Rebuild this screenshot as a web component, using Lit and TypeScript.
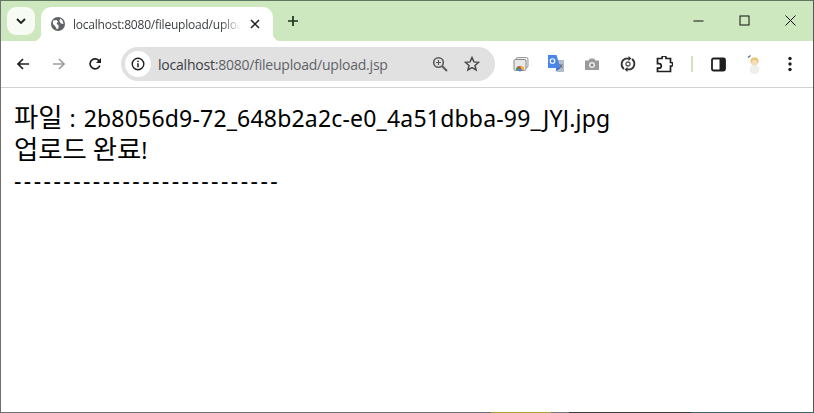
import { LitElement, html, css } from "lit";
import { customElement } from "lit/decorators.js";

@customElement("app-root")
export class AppRoot extends LitElement {
  static styles = css`
    :host { display: block; width: 814px; height: 413px; overflow: hidden; font-family: "Open Sans", "Noto Sans", sans-serif; }
    .win { box-sizing: border-box; width: 814px; height: 413px; border: 1px solid #6f6f6f; border-top-color: #5f7a60; border-right-color: #555; border-bottom: 0; background: #fff; display: flex; flex-direction: column; position: relative; }
    .tabs { height: 40px; background: #cde8bf; display: flex; align-items: flex-start; flex: none; }
    .drop { width: 28px; height: 28px; margin: 6px 0 0 6px; border-radius: 9px; background: #f6fbf3; display: flex; align-items: center; justify-content: center; flex: none; }
    .tab { width: 232px; height: 34px; margin: 6px 0 0 6px; background: #fff; border-radius: 10px 10px 0 0; display: flex; align-items: center; flex: none; position: relative; box-sizing: border-box; padding: 0 0 0 9px; }
    .tab::before, .tab::after { content: ""; position: absolute; bottom: 0; width: 8px; height: 8px; }
    .tab::before { left: -8px; background: radial-gradient(circle at 0 0, #cde8bf 8px, #fff 8.5px); }
    .tab::after { right: -8px; background: radial-gradient(circle at 100% 0, #cde8bf 8px, #fff 8.5px); }
    .tab-title { width: 168px; margin-left: 7px; font-size: 12px; color: #3c4043; white-space: nowrap; overflow: hidden; letter-spacing: -0.22px; -webkit-mask-image: linear-gradient(to right, #000 148px, transparent 168px); mask-image: linear-gradient(to right, #000 148px, transparent 168px); }
    .tab-x { margin-left: 9px; display: flex; }
    .plus { margin: 14px 0 0 14px; display: flex; }
    .spacer { flex: 1; }
    .wc { display: flex; }
    .wc div { width: 46px; height: 39px; display: flex; align-items: center; justify-content: center; }
    .toolbar { height: 46px; flex: none; background: #fff; border-bottom: 1px solid #d2d2d2; display: flex; align-items: center; }
    .nav { width: 36px; display: flex; justify-content: center; flex: none; }
    .nav.first { margin-left: 4px; }
    .omni { width: 374px; height: 34px; margin-left: 8px; border-radius: 17px; background: #e1e1e1; display: flex; align-items: center; flex: none; box-sizing: border-box; }
    .info { width: 26px; height: 26px; margin-left: 4px; border-radius: 50%; background: #fff; display: flex; align-items: center; justify-content: center; flex: none; }
    .url { margin-left: 7px; font-size: 14px; color: #5f6368; white-space: nowrap; flex: 1; letter-spacing: -0.22px; }
    .url b { font-weight: 400; color: #3c4043; }
    .omni-ico { display: flex; margin-right: 14px; }
    .omni-ico + .omni-ico { margin-left: 2px; margin-right: 15px; }
    .ext { display: flex; align-items: center; margin-left: 9px; }
    .ext > * { flex: none; }
    .ei { width: 36px; display: flex; justify-content: center; }
    .ei.tight { width: 34px; }
    .ei.wide { width: 37px; }
    .sep { width: 2px; height: 16px; background: #cde8bf; margin: 0 7px 0 8px; }
    .page { flex: 1; padding: 15px 13px 0; font-family: "Noto Sans", "Noto Sans CJK KR", sans-serif; font-size: 23px; color: #000; line-height: 31px; }
    .page div { white-space: nowrap; }
    .ko { font-family: "Noto Sans CJK KR", sans-serif; font-size: 26.4px; line-height: 1; }
    .colon { margin: 0 2px 0 1px; }
    .file { letter-spacing: 0.19px; }
    .done { margin-top: 1px; }
    .dashes { margin-top: -1px; letter-spacing: 2.45px; }
    .strip { position: absolute; left: -1px; right: -1px; bottom: 0; height: 1px; background: linear-gradient(to right, #6f6f6f 0, #6f6f6f 491px, #a89f30 491px, #a89f30 551px, #777 551px, #777 569px, #3a3a38 569px, #3a3a38 691px, #3f6468 691px, #3f6468 100%); }
  `;

  render() {
    return html`<div class="win">
      <div class="tabs">
        <div class="drop"><svg width="12" height="12" viewBox="0 0 12 12"><path d="M2 4l4 4 4-4" fill="none" stroke="#1f1f1f" stroke-width="1.8"/></svg></div>
        <div class="tab">
          <svg width="16" height="16" viewBox="0 0 16 16"><circle cx="8" cy="8" r="7" fill="#5f6368"/><path d="M3 4.500l3.500-.5L8 5.500 6.500 8l2 1v3L7 13.500 5 10 3 8z M10 2.500l2.500 2L13.500 8 11 7.500 9.500 5.500z" fill="#fff"/></svg>
          <div class="tab-title">localhost:8080/fileupload/upload.jsp</div>
          <div class="tab-x"><svg width="10" height="10" viewBox="0 0 10 10"><path d="M1 1l8 8M9 1l-8 8" stroke="#1f1f1f" stroke-width="1.500"/></svg></div>
        </div>
        <div class="plus"><svg width="12" height="12" viewBox="0 0 12 12"><path d="M6 1v10M1 6h10" stroke="#1f331f" stroke-width="1.700"/></svg></div>
        <div class="spacer"></div>
        <div class="wc">
          <div><svg width="11" height="11" viewBox="0 0 11 11"><path d="M0.500 6h10" stroke="#111" stroke-width="1"/></svg></div>
          <div><svg width="11" height="11" viewBox="0 0 11 11"><rect x="1" y="1" width="9" height="9" fill="none" stroke="#111" stroke-width="1"/></svg></div>
          <div><svg width="11" height="11" viewBox="0 0 11 11"><path d="M0.500 0.500l10 10M10.500 0.500l-10 10" stroke="#111" stroke-width="1"/></svg></div>
        </div>
      </div>
      <div class="toolbar">
        <div class="nav first"><svg width="14" height="14" viewBox="0 0 14 14"><path d="M13 7H2M7 2L2 7l5 5" fill="none" stroke="#1f1f1f" stroke-width="1.700"/></svg></div>
        <div class="nav"><svg width="14" height="14" viewBox="0 0 14 14"><path d="M1 7h11M7 2l5 5-5 5" fill="none" stroke="#9aa09a" stroke-width="1.700"/></svg></div>
        <div class="nav"><svg width="14" height="14" viewBox="0 0 14 14"><path d="M11.800 8.500A5 5 0 1 1 10.500 3.200L12.500 5" fill="none" stroke="#1f1f1f" stroke-width="1.600"/><path d="M13 1v5H8z" fill="#1f1f1f"/></svg></div>
        <div class="omni">
          <div class="info"><svg width="14" height="14" viewBox="0 0 14 14"><circle cx="7" cy="7" r="5.800" fill="none" stroke="#1f1f1f" stroke-width="1.400"/><path d="M7 6.200v4" stroke="#1f1f1f" stroke-width="1.500"/><circle cx="7" cy="4.300" r="0.900" fill="#1f1f1f"/></svg></div>
          <div class="url"><b>localhost</b>:8080/fileupload/upload.jsp</div>
          <div class="omni-ico"><svg width="16" height="16" viewBox="0 0 16 16"><circle cx="6.500" cy="6.500" r="4.800" fill="none" stroke="#5a5a5a" stroke-width="1.600"/><path d="M10 10l5 5" stroke="#5a5a5a" stroke-width="2"/><path d="M6.500 4v5M4 6.500h5" stroke="#5a5a5a" stroke-width="1.200"/></svg></div>
          <div class="omni-ico"><svg width="16" height="16" viewBox="0 0 16 16"><path d="M8 1.500l1.900 4.400 4.700.4-3.600 3.100 1.100 4.600L8 11.600 3.900 14l1.100-4.600L1.400 6.300l4.700-.4z" fill="none" stroke="#4a4a4a" stroke-width="1.500"/></svg></div>
        </div>
        <div class="ext">
          <div class="ei tight"><svg width="16" height="16" viewBox="0 0 16 16"><rect x="3" y="1.500" width="12" height="10" rx="1.500" fill="#eee" stroke="#999"/><rect x="1" y="3.500" width="12" height="11" rx="1.500" fill="#e8e8e8" stroke="#888"/><path d="M3 14a4 4 0 0 1 8 0z" fill="#d8473a"/><path d="M7 10a4 4 0 0 1 4 4H9z" fill="#e9b93a"/><path d="M3 14a4 4 0 0 1 2-3.500L7 14z" fill="#3a9d5d"/><circle cx="7" cy="14" r="1.500" fill="#4b82e6"/></svg></div>
          <div class="ei"><svg width="18" height="18" viewBox="0 0 18 18"><path d="M9 5h8v12H10z" fill="#b4bcc8"/><path d="M1 0h8.500l4 13H1z" fill="#4a86e8"/><path d="M9.500 13l-1 3.500 5-3.500z" fill="#3568c0"/><circle cx="5.500" cy="6" r="2.300" fill="none" stroke="#fff" stroke-width="1.100"/><path d="M12.500 9l3 4M15.500 9l-3 4" stroke="#667" stroke-width="1"/></svg></div>
          <div class="ei"><svg width="16" height="16" viewBox="0 0 16 16"><path d="M1 4.500h3.500L6 2.500h4l1.500 2H15V14H1z" fill="#9b9b9b"/><circle cx="8" cy="9" r="3" fill="#eee"/><circle cx="8" cy="9" r="1.500" fill="#888"/></svg></div>
          <div class="ei"><svg width="16" height="16" viewBox="0 0 16 16"><path d="M4 13A6 6 0 0 1 5.500 2.600H9M12 3A6 6 0 0 1 10.500 13.400H7" fill="none" stroke="#333" stroke-width="1.800"/><path d="M8.500 0v5l3-2.500zM7.500 16v-5l-3 2.500z" fill="#333"/><circle cx="8" cy="8" r="2" fill="none" stroke="#555" stroke-width="1.300"/></svg></div>
          <div class="ei wide"><svg width="17" height="17" viewBox="0 0 17 17"><path d="M1.500 2.500H6V2a2 2 0 0 1 4 0v.500h4.500V6.500h.500a1.800 1.800 0 0 1 0 3.600h-.500v5.400H1.500v-3.300H3a2.300 2.300 0 0 0 0-4.600H1.500z" fill="none" stroke="#1f1f1f" stroke-width="1.700"/></svg></div>
          <div class="sep"></div>
          <div class="ei"><svg width="15" height="15" viewBox="0 0 15 15"><rect x="1" y="1.500" width="13" height="12" rx="1.500" fill="#fff" stroke="#1f1f1f" stroke-width="1.800"/><rect x="8.500" y="1.500" width="5.500" height="12" fill="#1f1f1f"/></svg></div>
          <div class="ei"><svg width="18" height="20" viewBox="0 0 18 20"><path d="M3 3.500l2.500-2" stroke="#666" stroke-width="1.200"/><ellipse cx="9.500" cy="15.500" rx="5" ry="4.500" fill="#efefec"/><circle cx="9.500" cy="7.500" r="4" fill="#f4ddb8"/><path d="M5.500 7.500a4 4 0 0 1 8 0l-1 1.500-1-3h-4l-1 3z" fill="#e6c670"/></svg></div>
          <div class="ei"><svg width="4" height="16" viewBox="0 0 4 16"><circle cx="2" cy="2.500" r="1.700" fill="#1f1f1f"/><circle cx="2" cy="8" r="1.700" fill="#1f1f1f"/><circle cx="2" cy="13.500" r="1.700" fill="#1f1f1f"/></svg></div>
        </div>
      </div>
      <div class="page">
        <div><span class="ko">파일</span><span class="colon"> : </span><span class="file">2b8056d9-72_648b2a2c-e0_4a51dbba-99_JYJ.jpg</span></div>
        <div class="done"><span class="ko">업로드 완료</span>!</div>
        <div class="dashes">---------------------------</div>
      </div>
      <div class="strip"></div>
    </div>`;
  }
}
